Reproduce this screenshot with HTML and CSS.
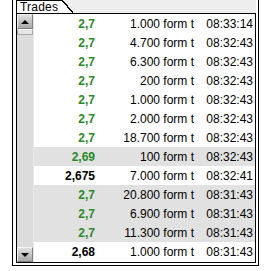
FILE: index.html
```html
<!DOCTYPE html>
<html lang="de">
<head>
    <meta charset="UTF-8">
    <title>Trades</title>
    <link rel="stylesheet" href="styles.css">
</head>
<body>

<div class="outer">
    <div class="tabbar">
        <div class="tab">Trades</div>
    </div>
    <div class="panel">
        <div class="scroll">
            <div class="btn up"><span class="tri-up"></span></div>
            <div class="thumb"></div>
            <div class="track"></div>
            <div class="btn down"><span class="tri-down"></span></div>
        </div>
        <div class="rows">
            <div class="row"><span class="price up">2,7</span><span class="qty">1.000 form t</span><span class="time">08:33:14</span></div>
            <div class="row"><span class="price up">2,7</span><span class="qty">4.700 form t</span><span class="time">08:32:43</span></div>
            <div class="row"><span class="price up">2,7</span><span class="qty">6.300 form t</span><span class="time">08:32:43</span></div>
            <div class="row"><span class="price up">2,7</span><span class="qty">200 form t</span><span class="time">08:32:43</span></div>
            <div class="row"><span class="price up">2,7</span><span class="qty">1.000 form t</span><span class="time">08:32:43</span></div>
            <div class="row"><span class="price up">2,7</span><span class="qty">2.000 form t</span><span class="time">08:32:43</span></div>
            <div class="row"><span class="price up">2,7</span><span class="qty">18.700 form t</span><span class="time">08:32:43</span></div>
            <div class="row alt"><span class="price up">2,69</span><span class="qty">100 form t</span><span class="time">08:32:43</span></div>
            <div class="row"><span class="price">2,675</span><span class="qty">7.000 form t</span><span class="time">08:32:41</span></div>
            <div class="row alt"><span class="price up">2,7</span><span class="qty">20.800 form t</span><span class="time">08:31:43</span></div>
            <div class="row alt"><span class="price up">2,7</span><span class="qty">6.900 form t</span><span class="time">08:31:43</span></div>
            <div class="row alt"><span class="price up">2,7</span><span class="qty">11.300 form t</span><span class="time">08:31:43</span></div>
            <div class="row"><span class="price">2,68</span><span class="qty">1.000 form t</span><span class="time">08:31:43</span></div>
        </div>
    </div>
</div>

</body>
</html>
```

FILE: styles.css
```css
* {
    margin: 0;
    padding: 0;
    box-sizing: border-box;
}

body {
    background: #fff;
    font-family: 'Liberation Sans', Arial, sans-serif;
    font-size: 12px;
    color: #000;
}

.outer {
    margin-left: 12px;
    width: 247px;
    height: 266px;
    border-left: 1px solid #000;
    border-right: 1px solid #000;
    border-bottom: 1px solid #000;
    padding: 0 2px 0 3px;
}

.tabbar {
    height: 13px;
    background: #eeeeee;
    display: flex;
}

.tab {
    position: relative;
    width: 46px;
    height: 13px;
    background: #fff;
    border-left: 1px solid #000;
    border-top: 1px solid #000;
    font-size: 12px;
    line-height: 12px;
    padding-left: 3px;
    letter-spacing: 0.2px;
}

.tab::after {
    content: "";
    position: absolute;
    right: -11px;
    top: -1px;
    width: 11px;
    height: 13px;
    background: linear-gradient(to top right, #fff 46%, #000 46%, #000 54%, transparent 54%);
}

.panel {
    display: flex;
    height: 250px;
    border: 1px solid #000;
}

.scroll {
    width: 17px;
    display: flex;
    flex-direction: column;
    background: #dcdcdc;
    border-right: 1px solid #e8e8e8;
}

.btn {
    height: 15px;
    width: 16px;
    background: linear-gradient(#e0e0e0, #a8a8a8);
    border: 1px solid #808080;
    border-top-color: #f4f4f4;
    border-left-color: #f4f4f4;
    display: flex;
    align-items: center;
    justify-content: center;
}

.tri-up {
    border-left: 4px solid transparent;
    border-right: 4px solid transparent;
    border-bottom: 4px solid #000;
}

.tri-down {
    border-left: 4px solid transparent;
    border-right: 4px solid transparent;
    border-top: 4px solid #000;
}

.thumb {
    height: 6px;
    width: 16px;
    background: #e4e4e4;
    border: 1px solid #a8a8a8;
    border-top-color: #f6f6f6;
}

.track {
    flex: 1;
}

.rows {
    flex: 1;
}

.row {
    display: flex;
    height: 19px;
    align-items: center;
    background: #fff;
}

.row.alt {
    background: #e1e1e1;
}

.price {
    width: 61px;
    text-align: right;
    font-weight: bold;
}

.price.up {
    color: #2a8a2a;
}

.qty {
    width: 99px;
    text-align: right;
}

.time {
    width: 59px;
    text-align: right;
}
```
